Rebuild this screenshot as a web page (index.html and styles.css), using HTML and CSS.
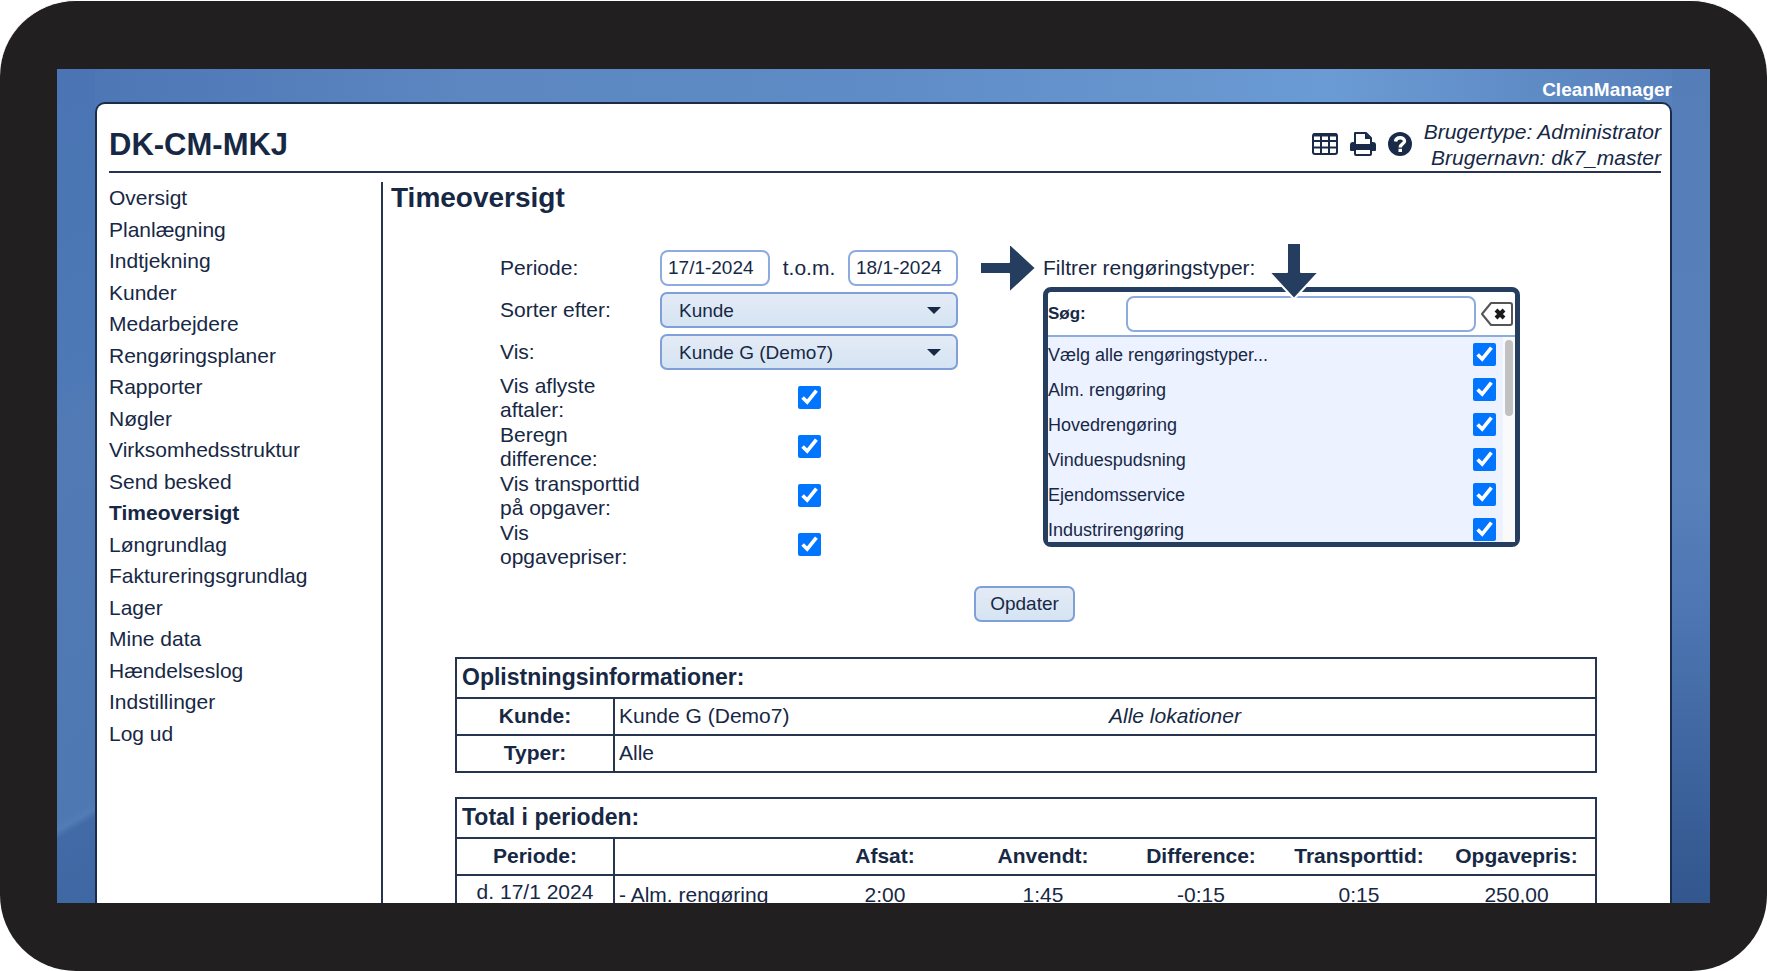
FILE: index.html
```
<!DOCTYPE html>
<html lang="da">
<head>
  <meta charset="UTF-8" />
  <meta name="viewport" content="width=device-width, initial-scale=1.0" />
  <title>CleanManager - Timeoversigt</title>
  <link rel="stylesheet" href="styles.css">
</head>
<body>
  <div class="device">
    <div class="screen">
      <div class="brand">CleanManager</div>
      <div class="page">
        <header class="header">
          <h1>DK-CM-MKJ</h1>
          <div class="tools">
            <a href="#" aria-label="Tabel">
              <svg width="26" height="24" viewBox="0 0 26 24" fill="none" stroke="#1a2b49" stroke-width="2">
                <rect x="1" y="2" width="24" height="20" rx="2" />
                <path d="M1 3h24" stroke-width="3" />
                <path d="M1 9h24M1 15.500h24M9 3v19M17 3v19" />
              </svg>
            </a>
            <a href="#" aria-label="Udskriv">
              <svg width="26" height="26" viewBox="0 0 26 26">
                <path d="M3 11h20q3 0 3 3v5q0 1-1 1H1q-1 0-1-1v-5q0-3 3-3z" fill="#1a2b49" />
                <path d="M5 14V2h11l5 5v7z" fill="#fff" stroke="#1a2b49" stroke-width="2" stroke-linejoin="round" />
                <path d="M15 2v6h6z" fill="#1a2b49" />
                <rect x="3" y="13" width="20" height="4" fill="#1a2b49" />
                <rect x="5" y="18" width="16" height="6" rx="1" fill="#fff" stroke="#1a2b49" stroke-width="2" />
              </svg>
            </a>
            <a href="#" aria-label="Hjælp">
              <svg width="24" height="24" viewBox="0 0 24 24">
                <circle cx="12" cy="12" r="12" fill="#1a2b49" />
                <path d="M7.500 9.500C8 4.500 16.500 4.500 16.500 9.200C16.500 12 12.200 12 12.200 15.500" fill="none" stroke="#fff" stroke-width="3.400" />
                <rect x="10.500" y="16.800" width="3.500" height="3.200" fill="#fff" />
              </svg>
            </a>
          </div>
          <div class="user">Brugertype: Administrator<br>Brugernavn: dk7_master</div>
        </header>

        <div class="body">
          <nav class="menu">
            <a href="#">Oversigt</a>
            <a href="#">Planlægning</a>
            <a href="#">Indtjekning</a>
            <a href="#">Kunder</a>
            <a href="#">Medarbejdere</a>
            <a href="#">Rengøringsplaner</a>
            <a href="#">Rapporter</a>
            <a href="#">Nøgler</a>
            <a href="#">Virksomhedsstruktur</a>
            <a href="#">Send besked</a>
            <a href="#" class="active">Timeoversigt</a>
            <a href="#">Løngrundlag</a>
            <a href="#">Faktureringsgrundlag</a>
            <a href="#">Lager</a>
            <a href="#">Mine data</a>
            <a href="#">Hændelseslog</a>
            <a href="#">Indstillinger</a>
            <a href="#">Log ud</a>
          </nav>

          <main class="content">
            <h2>Timeoversigt</h2>
            <form>
              <div class="filters">
                <div class="fields">
                  <div class="field">
                    <label for="from">Periode:</label>
                    <div class="period">
                      <input type="text" id="from" value="17/1-2024" />
                      <label for="to">t.o.m.</label>
                      <input type="text" id="to" value="18/1-2024" />
                    </div>
                  </div>
                  <div class="field">
                    <label for="sort">Sorter efter:</label>
                    <div class="select"><select id="sort"><option>Kunde</option></select></div>
                  </div>
                  <div class="field">
                    <label for="show">Vis:</label>
                    <div class="select"><select id="show"><option>Kunde G (Demo7)</option></select></div>
                  </div>
                  <div class="field check">
                    <label for="cancelled">Vis aflyste aftaler:</label>
                    <input type="checkbox" id="cancelled" checked />
                  </div>
                  <div class="field check">
                    <label for="diff">Beregn difference:</label>
                    <input type="checkbox" id="diff" checked />
                  </div>
                  <div class="field check">
                    <label for="transport">Vis transporttid på opgaver:</label>
                    <input type="checkbox" id="transport" checked />
                  </div>
                  <div class="field check">
                    <label for="prices">Vis opgavepriser:</label>
                    <input type="checkbox" id="prices" checked />
                  </div>
                </div>

                <div class="types">
                  <div class="types-title">Filtrer rengøringstyper:</div>
                  <svg class="arrow arrow-right" width="58" height="52" viewBox="0 0 58 52">
                    <path d="M1 20h29V1l27 25-27 25V32H1z" />
                  </svg>
                  <div class="types-box">
                    <div class="search">
                      <label for="search">Søg:</label>
                      <input type="text" id="search" />
                      <button type="button" class="clear" aria-label="Ryd">
                        <svg width="32" height="24" viewBox="0 0 32 24">
                          <path d="M10 1h19q2 0 2 2v18q0 2-2 2H10L1 12z" fill="#fff" stroke="#555" stroke-width="2" stroke-linejoin="round" />
                          <path d="M15 8l8 8M23 8l-8 8" stroke="#1a1a1a" stroke-width="4" />
                        </svg>
                      </button>
                    </div>
                    <div class="list-wrap">
                      <div class="list">
                        <label>Vælg alle rengøringstyper... <input type="checkbox" checked /></label>
                        <label>Alm. rengøring <input type="checkbox" checked /></label>
                        <label>Hovedrengøring <input type="checkbox" checked /></label>
                        <label>Vinduespudsning <input type="checkbox" checked /></label>
                        <label>Ejendomsservice <input type="checkbox" checked /></label>
                        <label>Industrirengøring <input type="checkbox" checked /></label>
                      </div>
                      <div class="track"><div class="thumb"></div></div>
                    </div>
                  </div>
                  <svg class="arrow arrow-down" width="52" height="58" viewBox="0 0 52 58">
                    <path d="M19 1h14v29h18L26 57 1 30h18z" />
                  </svg>
                </div>
              </div>
              <button type="submit" class="btn">Opdater</button>
            </form>

            <table>
              <colgroup><col class="col-key"><col></colgroup>
              <tr class="title"><th colspan="2">Oplistningsinformationer:</th></tr>
              <tr>
                <th>Kunde:</th>
                <td><div class="split"><span>Kunde G (Demo7)</span><em>Alle lokationer</em></div></td>
              </tr>
              <tr><th>Typer:</th><td>Alle</td></tr>
            </table>

            <table>
              <colgroup><col class="col-key"><col><col class="col-num" span="5"></colgroup>
              <tr class="title"><th colspan="7">Total i perioden:</th></tr>
              <tr>
                <th>Periode:</th>
                <th></th>
                <th>Afsat:</th>
                <th>Anvendt:</th>
                <th>Difference:</th>
                <th>Transporttid:</th>
                <th>Opgavepris:</th>
              </tr>
              <tr class="data">
                <td>d. 17/1 2024</td>
                <td>- Alm. rengøring</td>
                <td>2:00</td>
                <td>1:45</td>
                <td>-0:15</td>
                <td>0:15</td>
                <td>250,00</td>
              </tr>
            </table>
          </main>
        </div>
      </div>
    </div>
  </div>
</body>
</html>
```
FILE: styles.css
```
* { box-sizing: border-box; margin: 0; padding: 0; }
body { font-family: "Liberation Sans", Arial, sans-serif; font-size: 21px; line-height: 26px; color: #172845; background: #fff; }
a { color: inherit; text-decoration: none; }
input, select, button { font-family: inherit; font-size: 19px; color: inherit; }

.device { height: 100vh; padding: 68px 57px; background: #221f20; border-top: 1px solid #fff; border-radius: 76px; }
.screen {
  height: 100%; overflow: hidden; display: flex; flex-direction: column; padding: 0 38px;
  background:
    linear-gradient(150deg, #4a74b3 0%, #4d79b6 38%, #527bb5 42%, #4e78b1 88%, #527cb5 89%, #426aa6 90%, #3e68a3 100%) left / 38px 100% no-repeat,
    linear-gradient(180deg, #557eb9 0%, #5880bb 50%, #4d76b2 65%, #3d639d 85%, #32568d 100%) right / 38px 100% no-repeat,
    linear-gradient(90deg, #4b75b4 0%, #5c87c1 25%, #5f8cc6 50%, #6b9bd4 77%, #557eb9 100%);
}
.brand { height: 33px; padding-top: 8px; font-size: 19px; font-weight: bold; color: #fff; text-align: right; }
.page { flex: 1; display: flex; flex-direction: column; padding: 15px 9px 0 12px; background: #fff; border: 2px solid #1b2c49; border-bottom: none; border-radius: 10px 10px 0 0; }

.header { display: flex; align-items: center; border-bottom: 2px solid #26344f; }
h1 { flex: 1; font-size: 31px; line-height: 36px; }
.tools { display: flex; align-items: center; gap: 12px; margin-bottom: 2px; }
.tools a, .tools svg { display: block; }
.user { margin-left: 12px; font-style: italic; text-align: right; }

.body { flex: 1; display: flex; margin-top: 9px; }
.menu { width: 274px; border-right: 2px solid #26344f; display: flex; flex-direction: column; line-height: 1.5; }
.menu .active { font-weight: bold; }

.content { flex: 1; padding-left: 8px; }
h2 { font-size: 28px; line-height: 32px; margin-bottom: 33px; }
form { display: flex; flex-direction: column; align-items: center; }
.filters { align-self: stretch; display: flex; gap: 85px; margin-left: 109px; }
.fields { width: 458px; }
.field { display: grid; grid-template-columns: 150px 298px; justify-content: space-between; align-items: center; height: 42px; }
.check { height: 49px; line-height: 24px; }
input[type="checkbox"] { width: 23px; height: 23px; accent-color: #0075ff; }
.check input { justify-self: center; }
.period { display: flex; align-items: center; justify-content: space-between; }
input[type="text"] { height: 36px; padding: 0 6px; background: #fff; border: 2px solid #8dabde; border-radius: 8px; }
.period input { width: 110px; }
.select { position: relative; }
.select::after { content: ""; position: absolute; right: 17px; top: 15px; border: 7px solid transparent; border-top-color: #172845; border-bottom: none; }
select, .btn { height: 36px; border: 2px solid #7f9fd6; border-radius: 7px; background: linear-gradient(#e4ebf6, #d5e4f3); }
select { display: block; width: 100%; padding: 0 17px; appearance: none; }
.btn { width: 101px; margin: 17px 3px 35px 0; }

.types { position: relative; width: 477px; padding-top: 8px; }
.types-box { margin-top: 6px; border: 5px solid #253e5f; border-radius: 8px; background: #fff; }
.search { display: flex; align-items: center; height: 45px; border-bottom: 2px solid #8dabde; }
.search label { width: 78px; font-size: 17px; font-weight: bold; }
.search input { flex: 1; }
.clear { display: block; margin: 0 2px 0 5px; background: none; border: none; }
.clear svg { display: block; }
.list-wrap { display: flex; height: 205px; overflow: hidden; background: #fafafa; }
.list { flex: 1; background: #ecf2ff; font-size: 18px; }
.list label { display: flex; align-items: center; justify-content: space-between; height: 35px; padding-right: 7px; }
.track { width: 12px; padding: 3px 2px 0; }
.thumb { width: 8px; height: 76px; border-radius: 4px; background: #c1c1c1; }

/* pegepile */
.arrow { position: absolute; fill: #253e5f; stroke: #fff; stroke-width: 2px; stroke-linejoin: round; }
.arrow-right { left: -64px; top: -5px; }
.arrow-down { left: 225px; top: -5px; }

table { width: calc(100% - 128px); margin: 0 64px 24px; table-layout: fixed; border-collapse: collapse; border: 2px solid #26344f; }
.col-key, .col-num { width: 158px; }
tr { height: 37px; border-bottom: 2px solid #26344f; }
th, td { padding-bottom: 2px; }
th:first-child { border-right: 2px solid #26344f; }
.title { height: 40px; }
.title th { padding-left: 5px; font-size: 23px; text-align: left; }
td { padding-left: 4px; }
.split { display: grid; grid-template-columns: 490px 1fr; }
.data td { padding: 6px 0 0; text-align: center; vertical-align: top; }
.data td:first-child { padding-top: 3px; border-right: 2px solid #26344f; }
.data td:nth-child(2) { padding-left: 4px; text-align: left; }
```
